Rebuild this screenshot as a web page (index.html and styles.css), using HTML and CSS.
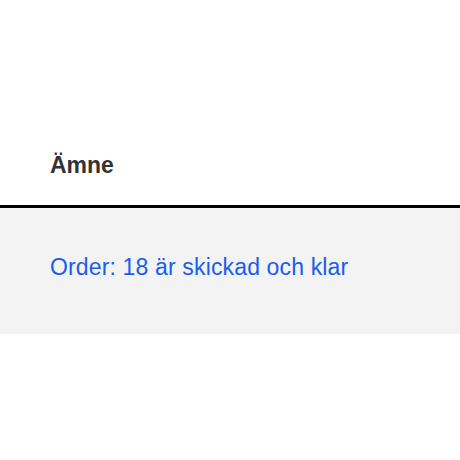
FILE: index.html
```html
<!DOCTYPE html>
<html lang="sv">
<head>
    <meta charset="UTF-8">
    <meta name="viewport" content="width=device-width, initial-scale=1.0">
    <title>Meddelanden</title>
    <link rel="stylesheet" href="styles.css">
</head>
<body>
    <table class="messages">
        <thead>
            <tr>
                <th>Ämne</th>
            </tr>
        </thead>
        <tbody>
            <tr>
                <td><a href="#">Order: 18 är skickad och klar</a></td>
            </tr>
        </tbody>
    </table>
</body>
</html>
```

FILE: styles.css
```css
body {
    font-family: "Liberation Sans", Arial, sans-serif;
    margin: 0;
    padding-top: 130px;
    background-color: #fff;
}
.messages {
    width: 100%;
    border-collapse: collapse;
}
.messages th {
    text-align: left;
    font-size: 23px;
    line-height: 26px;
    font-weight: bold;
    color: #333;
    padding: 22px 50px 27px;
    border-bottom: 3px solid #000;
}
.messages td {
    background-color: #f3f3f3;
    padding: 46px 50px 54px;
    font-size: 23px;
    line-height: 26px;
    letter-spacing: 0.15px;
}
.messages a {
    color: #1a5cf0;
    text-decoration: none;
}
```
